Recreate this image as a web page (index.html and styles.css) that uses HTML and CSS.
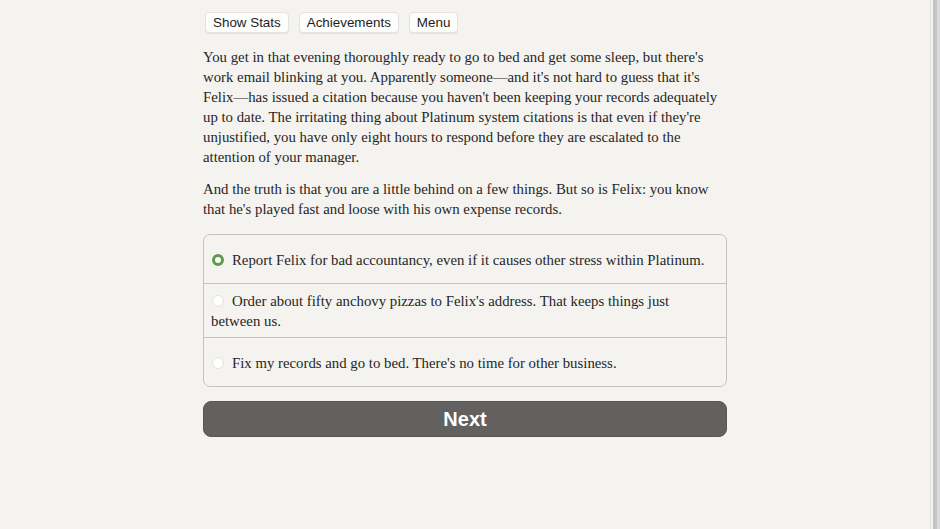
FILE: index.html
```html
<!DOCTYPE html>
<html>
<head>
<meta charset="utf-8">
<link rel="stylesheet" href="styles.css">
</head>
<body>
<div class="page">
  <main class="container">
    <nav class="buttons">
      <button class="spacedLink">Show Stats</button>
      <button class="spacedLink">Achievements</button>
      <button class="spacedLink">Menu</button>
    </nav>
    <div class="text">
      <p>You get in that evening thoroughly ready to go to bed and get some sleep, but there's<br>work email blinking at you. Apparently someone—and it's not hard to guess that it's<br>Felix—has issued a citation because you haven't been keeping your records adequately<br>up to date. The irritating thing about Platinum system citations is that even if they're<br>unjustified, you have only eight hours to respond before they are escalated to the<br>attention of your manager.</p>
      <p>And the truth is that you are a little behind on a few things. But so is Felix: you know<br>that he's played fast and loose with his own expense records.</p>
    </div>
    <form class="choice">
      <label class="option"><span class="optionText"><span class="radio checked"></span>Report Felix for bad accountancy, even if it causes other stress within Platinum.</span></label>
      <label class="option"><span class="optionText"><span class="radio"></span>Order about fifty anchovy pizzas to Felix's address. That keeps things just<br>between us.</span></label>
      <label class="option"><span class="optionText"><span class="radio"></span>Fix my records and go to bed. There's no time for other business.</span></label>
    </form>
    <button class="next">Next</button>
  </main>
</div>
<div class="scrollbar"></div>
</body>
</html>
```
FILE: styles.css
```css
html, body {
  margin: 0;
  padding: 0;
  background: #f4f3ef;
  height: 100%;
  overflow: hidden;
}
.page {
  width: 930px;
  display: flex;
  justify-content: center;
}
.container {
  width: 524px;
  padding-top: 12px;
  font-family: "Liberation Serif", "Times New Roman", serif;
  font-size: 14.8px;
  color: #262626;
}
.buttons {
  display: flex;
  gap: 10px;
  padding-left: 2px;
}
.spacedLink {
  font-family: "Liberation Sans", Arial, sans-serif;
  font-size: 13.4px;
  color: #1e1e1e;
  background: #fdfdfc;
  border: 1px solid #e4e3df;
  border-radius: 4px;
  height: 21px;
  padding: 0 7px;
  line-height: 19px;
  box-shadow: 0 1px 1px rgba(0,0,0,0.07);
}
.text {
  margin-top: 14px;
}
.text p {
  margin: 0 0 12px 0;
  line-height: 20px;
  white-space: nowrap;
}
.choice {
  margin-top: 15px;
  border: 1px solid #c4c3c0;
  border-radius: 7px;
  display: flex;
  flex-direction: column;
}
.option {
  display: flex;
  align-items: center;
  min-height: 35px;
  padding: 7px 7px 6px 7px;
  line-height: 20px;
  border-top: 1px solid #c4c3c0;
}
.option:first-child {
  border-top: none;
}
.optionText {
  display: block;
  white-space: nowrap;
}
.radio {
  display: inline-block;
  width: 12px;
  height: 12px;
  border-radius: 50%;
  background: #ffffff;
  border: 1px solid #e2e1de;
  box-sizing: border-box;
  margin: 0 8px 0 1px;
  vertical-align: -1px;
}
.radio.checked {
  border: 3px solid #5a9e48;
  background: #fdfdfd;
}
.next {
  display: block;
  width: 524px;
  height: 36px;
  margin-top: 14px;
  background: #626160;
  color: #ffffff;
  border: 1px solid #575655;
  border-radius: 8px;
  font-family: "Liberation Sans", Arial, sans-serif;
  font-weight: bold;
  font-size: 20px;
}
.scrollbar {
  position: fixed;
  top: 0;
  right: 0;
  width: 3px;
  height: 100%;
  background: #dcdbe0;
  border-left: 4px solid #c4c3c8;
  box-shadow: -2px 0 0 #f4f3ef, -3px 0 0 #e2e1dc;
}
```
